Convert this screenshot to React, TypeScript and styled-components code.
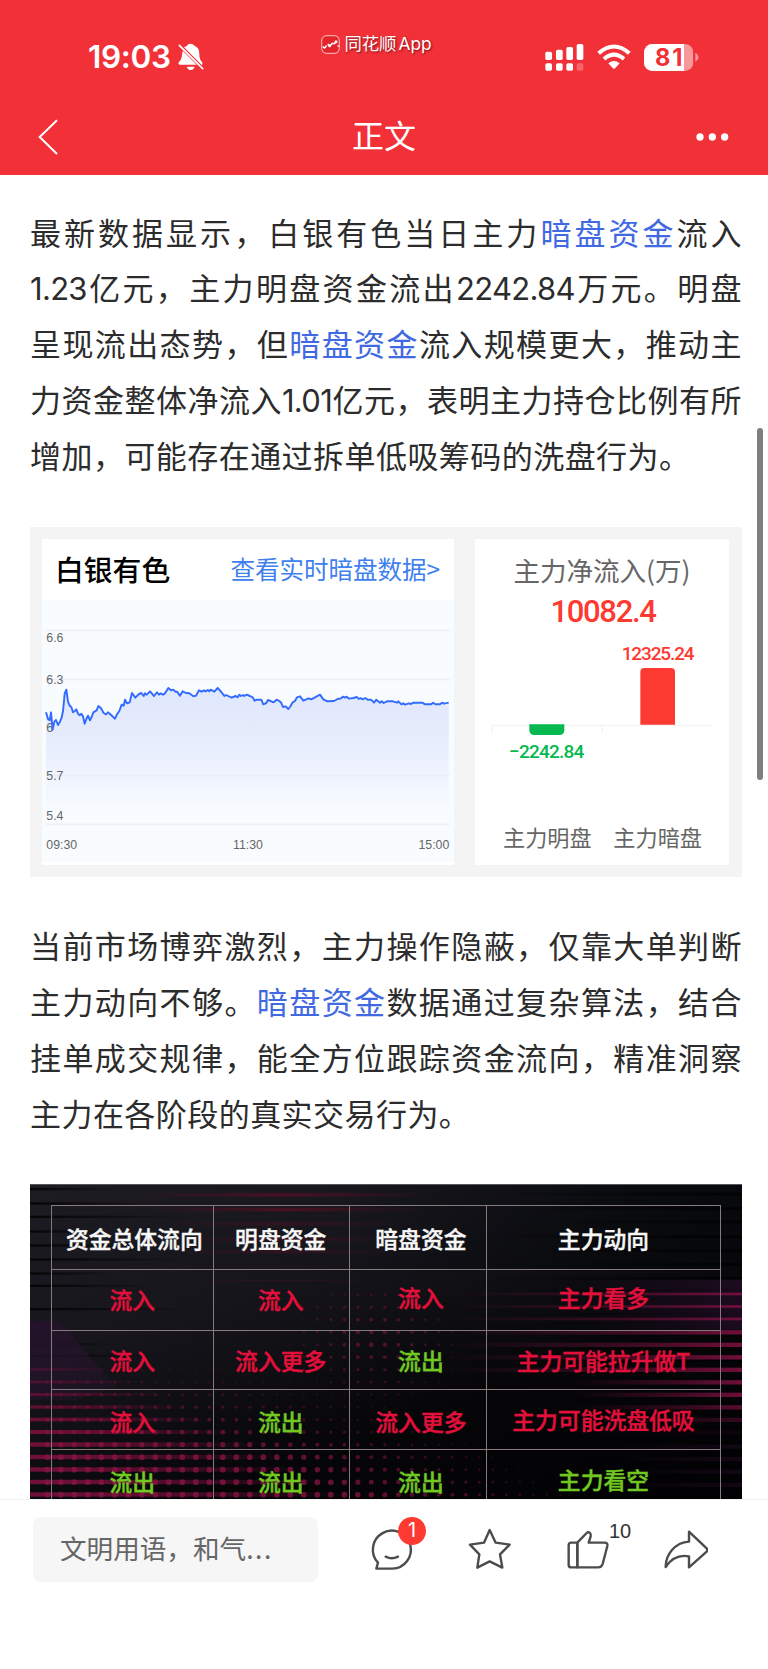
import React from "react";
import styled, { createGlobalStyle } from "styled-components";

const cjk = '"Noto Sans CJK SC", sans-serif';

const GlobalStyle = createGlobalStyle`
  * { box-sizing: border-box; }
  body {
    margin: 0;
    background: #fff;
    font-family: Inter, ${cjk};
    text-spacing-trim: space-all;
    text-autospace: no-autospace;
  }
  svg { display: block; flex: none; }
`;

const Page = styled.div`
  position: relative;
  display: flex;
  flex-direction: column;
  width: 768px;
  height: 1669px;
  overflow: hidden;
  background: #fff;
`;

/* ---------- header ---------- */

const Header = styled.header`
  flex: none;
  height: 175px;
  background: #f23038;
  color: #fff;
`;

const StatusBar = styled.div`
  display: grid;
  grid-template-columns: 1fr 120px 1fr;
  height: 100px;
`;

const StatusLeft = styled.div`
  display: flex;
  align-items: center;
  gap: 7px;
  padding: 14px 0 0 88px;
`;

const Clock = styled.span`
  font: 600 31.5px/36px Inter, sans-serif;
  width: 83px;
  letter-spacing: -0.3px;
  white-space: nowrap;
`;

const AppTag = styled.div`
  display: flex;
  align-items: center;
  justify-content: center;
  gap: 4px;
  height: 26px;
  margin-top: 31px;
  padding-right: 15px;
  font: 400 17.4px/26px Inter, ${cjk};
  letter-spacing: -0.1px;
  word-spacing: -2.5px;
  white-space: nowrap;
  text-shadow: 1px 1px 2px rgba(90, 0, 0, 0.75);
`;

const StatusRight = styled.div`
  display: flex;
  align-items: center;
  gap: 13px;
  padding: 14px 0 0 101px;
`;

const NavBar = styled.nav`
  display: flex;
  align-items: center;
  justify-content: space-between;
  height: 75px;
  padding: 0 39px 2px 38px;
`;

const NavTitle = styled.h1`
  margin: 0;
  padding: 0 0 5px 13px;
  font: 400 32px/44px ${cjk};
`;

/* ---------- article ---------- */

const Article = styled.main`
  flex: 1;
  min-height: 0;
  overflow: hidden;
  padding: 28.5px 26.5px 0 30px;
`;

const Paragraph = styled.p<{ $gap: number }>`
  margin: 0 0 ${(p) => p.$gap}px;
  color: #2c2c2c;
  font: 400 31px/55.9px ${cjk};
`;

const Line = styled.span<{ $end?: boolean }>`
  display: block;
  height: 55.9px;
  white-space: nowrap;
  text-align: justify;
  text-align-last: ${(p) => (p.$end ? "left" : "justify")};
  letter-spacing: ${(p) => (p.$end ? "0.45px" : "0")};
`;

const Num = styled.span`
  font-family: Inter, sans-serif;
  line-height: 1;
  letter-spacing: -0.7px;
`;

const Link = styled.a`
  color: #4169e1;
`;

/* ---------- stock card ---------- */

const StockCard = styled.section`
  display: flex;
  gap: 21px;
  height: 350px;
  margin-bottom: 40.5px;
  padding: 12px 12.5px 12px 12px;
  background: #f4f4f4;
`;

const Panel = styled.div<{ $width: number }>`
  width: ${(p) => p.$width}px;
  background: #fff;
`;

const PanelHead = styled.div`
  display: flex;
  align-items: center;
  justify-content: space-between;
  height: 61px;
  padding: 0 14px 0 13px;
`;

const StockName = styled.strong`
  color: #000;
  font: 500 28.8px/40px ${cjk};
`;

const DetailLink = styled.a`
  color: #3e80ee;
  font: 400 24.5px/36px ${cjk};
`;

const FlowHead = styled.div`
  display: flex;
  flex-direction: column;
  align-items: center;
  height: 92px;
  padding-top: 12px;
`;

const FlowTitle = styled.span`
  color: #666;
  font: 400 26.5px/38px ${cjk};
`;

const FlowTotal = styled.strong`
  padding: 2px 0 0 2px;
  color: #fd3a31;
  font: 500 31px/42px Roboto, sans-serif;
  letter-spacing: -1.3px;
`;

/* ---------- table picture ---------- */

const Picture = styled.figure`
  position: relative;
  height: 330px;
  margin: 0;
  padding: 21.3px 21px 0 20.6px;
  overflow: hidden;
  background: #0c0c10;
`;

const Backdrop = styled.svg`
  position: absolute;
  inset: 0;
`;

const FlowTable = styled.div`
  position: relative;
  display: grid;
  grid-template-columns: 162.4px 136.4px 137px 1fr;
  grid-template-rows: 63.5px 60.7px 59.2px 60.7px 61px;
  border-left: 1.5px solid #877a7d;
  border-top: 1.5px solid #877a7d;
`;

const Cell = styled.div<{ $color: string; $x: number; $y: number }>`
  display: flex;
  align-items: center;
  justify-content: center;
  border-right: 1.5px solid #877a7d;
  border-bottom: 1.5px solid #877a7d;
  color: ${(p) => p.$color};
  font: 500 22.8px/26px ${cjk};
  -webkit-text-stroke: 0.4px currentColor;
  white-space: nowrap;

  > span {
    transform: translate(${(p) => p.$x}px, ${(p) => p.$y - 1.5}px);
  }
`;

/* ---------- bottom bar ---------- */

const BottomBar = styled.footer`
  flex: none;
  display: flex;
  align-items: flex-start;
  height: 170.5px;
  padding: 17px 0 0 33px;
  border-top: 1px solid #f3f3f3;
  background: #fff;
`;

const CommentInput = styled.div`
  width: 285px;
  height: 65px;
  padding: 0 27px;
  border-radius: 8px;
  background: #f6f6f6;
  color: #666;
  font: 400 26.6px/62px ${cjk};
  white-space: nowrap;
`;

const Ellipsis = styled.span`
  letter-spacing: 1.5px;
`;

const Actions = styled.div`
  display: flex;
  padding: 10px 0 0 52px;
  gap: 54px;
`;

const Action = styled.div`
  position: relative;
  width: 44px;
  height: 44px;
`;

const Badge = styled.span`
  position: absolute;
  left: 28px;
  top: -10px;
  width: 28px;
  height: 28px;
  border-radius: 50%;
  background: #fd3a31;
  color: #fff;
  font: 400 20px/27px Inter, sans-serif;
  text-align: center;
`;

const Count = styled.span`
  position: absolute;
  left: 43px;
  top: -8px;
  color: #333;
  font: 400 20px/24px "Liberation Sans", sans-serif;
`;

const ScrollThumb = styled.div`
  position: absolute;
  left: 757px;
  top: 428px;
  width: 6px;
  height: 352px;
  border-radius: 3px;
  background: #7f7f7f;
`;

/* ---------- price chart ---------- */

const pricePoints =
  "78,594 84,614 89,618 93,594 98,646 103,622 108,617 114,632 120,622 125,610 129,590 132,560 134,538 139,526 144,562 149,574 154,578 159,594 164,590 169,585 174,598 179,603 184,598 189,606 194,628 199,614 204,604 210,618 215,608 220,594 230,588 235,575 243,582 251,596 258,600 264,594 274,603 285,613 291,600 298,590 305,571 311,574 315,556 321,567 329,564 336,536 346,550 357,539 364,536 371,545 375,537 380,541 390,531 402,545 411,534 417,541 421,537 429,541 435,537 445,521 453,528 460,526 466,532 471,532 480,544 488,531 498,536 508,537 520,546 528,544 537,528 545,532 552,528 557,531 563,527 568,531 572,526 583,532 593,521 603,532 613,545 618,542 635,550 647,545 653,549 658,541 663,545 669,542 673,545 680,541 690,545 698,549 704,559 710,556 724,556 730,570 739,566 744,557 761,564 770,556 778,560 784,566 789,578 797,576 805,584 810,578 818,564 825,560 831,549 840,546 850,559 866,552 874,555 885,549 900,541 910,555 922,561 942,560 953,554 963,552 969,547 975,550 980,547 987,553 1000,551 1011,548 1016,554 1021,551 1028,555 1036,551 1043,556 1053,556 1062,565 1069,556 1080,565 1085,561 1091,566 1101,561 1119,561 1131,565 1135,561 1144,570 1150,567 1155,571 1167,567 1173,569 1180,565 1207,565 1215,570 1233,570 1239,565 1246,570 1260,570 1266,565 1272,568 1286,565";

const gridLines = [348, 495, 640, 783, 930];
const priceLabels: [string, number][] = [
  ["6.6", 384],
  ["6.3", 509],
  ["6", 653],
  ["5.7", 798],
  ["5.4", 918],
];

const PriceChart = () => (
  <svg width="412" height="262" viewBox="66 257 1236 786">
    <defs>
      <linearGradient id="area" gradientUnits="userSpaceOnUse" x1="0" y1="520" x2="0" y2="915">
        <stop offset="0" stopColor="#dfe7fc" />
        <stop offset="0.35" stopColor="#e6ecfd" />
        <stop offset="1" stopColor="#f9fcff" />
      </linearGradient>
    </defs>
    <rect x="66" y="257" width="1236" height="786" fill="#f9fcff" />
    <polygon points={`${pricePoints} 1286,928 78,928`} fill="url(#area)" />
    {gridLines.map((y) => (
      <path key={y} d={`M78 ${y}H1289`} stroke="#e6eaf3" strokeOpacity="0.65" strokeWidth="5" />
    ))}
    <g fill="#666" fontFamily="Liberation Sans, sans-serif" fontSize="37">
      {priceLabels.map(([label, y]) => (
        <text key={label} x="79" y={y}>{label}</text>
      ))}
      <text x="79" y="1004">09:30</text>
      <text x="639" y="1004">11:30</text>
      <text x="1288" y="1004" textAnchor="end">15:00</text>
    </g>
    <polyline points={pricePoints} fill="none" stroke="#336bff" strokeWidth="5.8" strokeLinejoin="round" />
  </svg>
);

const FlowChart = () => (
  <svg width="254" height="233" viewBox="45 349 762 699">
    <path d="M97 656V632H759M427 632V656" fill="none" stroke="#f3f3f3" strokeWidth="4" />
    <path d="M541 630V472Q541 460 553 460H633Q645 460 645 472V630Z" fill="#fd3a31" />
    <path d="M208 629V645Q208 661 224 661H297Q313 661 313 645V629Z" fill="#05b850" />
    <g fontFamily="Roboto, sans-serif" fontSize="57" fontWeight="500">
      <text x="485" y="436" textLength="219" fill="#fd3a31">12325.24</text>
      <text x="147" y="731" textLength="226" fill="#05b850">−2242.84</text>
    </g>
    <g fontFamily="Noto Sans CJK SC, sans-serif" fontSize="66.5" fill="#666">
      <text x="129" y="995">主力明盘</text>
      <text x="460" y="995">主力暗盘</text>
    </g>
  </svg>
);

/* ---------- table backdrop ---------- */

const rowY = (i: number) => 375 + i * 37.5;

const dots: { x: number; y: number; r: number; o: number }[] = [];
for (let i = 0; i < 17; i++) {
  for (let k = 0; k < 45; k++) {
    const x = 142 + k * 40.5;
    const y = rowY(i);
    const low = i < 6 ? 0 : Math.min(1, (i - 5) / 8) * Math.max(0, 1 - Math.max(0, x - 300 - (i - 6) * 75) / 700);
    const mid = Math.max(0, 1 - Math.hypot((x - 1120) / 290, (y - 510) / 210)) * 0.75;
    const v = Math.max(low, mid);
    if (v > 0.05) dots.push({ x, y, r: 2.5 + v * 6, o: 0.2 + v * 0.55 });
  }
}

const darkStreaks = [55, 98, 138, 182, 224, 266, 308, 345, 415, 520, 555];
const leftStripes = Array.from({ length: 11 }, (_, i) => i);
const rightStripes = Array.from({ length: 12 }, (_, i) => i);

const TableBackdrop = () => (
  <Backdrop width="712" height="330" viewBox="90 43 2136 990" preserveAspectRatio="none">
    <defs>
      <linearGradient id="base" x1="0" y1="0" x2="0.8" y2="1">
        <stop offset="0" stopColor="#1c1c22" />
        <stop offset="0.35" stopColor="#15151b" />
        <stop offset="0.7" stopColor="#060609" />
        <stop offset="1" stopColor="#020204" />
      </linearGradient>
      <linearGradient id="fadeRight">
        <stop offset="0" stopColor="#711039" />
        <stop offset="0.35" stopColor="#5c0d2e" />
        <stop offset="1" stopColor="#5c0d2e" stopOpacity="0" />
      </linearGradient>
      <linearGradient id="fadeLeft">
        <stop offset="0" stopColor="#680f36" stopOpacity="0" />
        <stop offset="0.6" stopColor="#680f36" stopOpacity="0.6" />
        <stop offset="1" stopColor="#7b1040" />
      </linearGradient>
      <linearGradient id="streak">
        <stop offset="0" stopColor="#000" stopOpacity="0.8" />
        <stop offset="1" stopColor="#000" stopOpacity="0" />
      </linearGradient>
      <linearGradient id="streakRight">
        <stop offset="0" stopColor="#000" stopOpacity="0" />
        <stop offset="1" stopColor="#000" stopOpacity="0.7" />
      </linearGradient>
      <linearGradient id="glow">
        <stop offset="0" stopColor="#5a0d25" stopOpacity="0" />
        <stop offset="0.5" stopColor="#5a0d25" stopOpacity="0.7" />
        <stop offset="1" stopColor="#5a0d25" stopOpacity="0" />
      </linearGradient>
      <linearGradient id="violet" x1="0" y1="0" x2="0.8" y2="1">
        <stop offset="0" stopColor="#24122a" />
        <stop offset="1" stopColor="#27152f" stopOpacity="0.35" />
      </linearGradient>
      <linearGradient id="haze">
        <stop offset="0" stopColor="#2a0f2c" stopOpacity="0" />
        <stop offset="1" stopColor="#2a0f2c" stopOpacity="0.6" />
      </linearGradient>
      <linearGradient id="shadeRight">
        <stop offset="0" stopColor="#05070a" stopOpacity="0" />
        <stop offset="1" stopColor="#05070a" stopOpacity="0.75" />
      </linearGradient>
    </defs>
    <rect x="90" y="43" width="2136" height="990" fill="url(#base)" />
    <rect x="1000" y="43" width="1226" height="260" fill="url(#shadeRight)" />
    <rect x="90" y="43" width="2136" height="3" fill="#55565a" />
    {darkStreaks.map((y, i) => (
      <g key={y}>
        <rect x="90" y={y} width={260 + (i % 3) * 120} height="7" fill="url(#streak)" />
        <rect x={1450 + (i % 3) * 90} y={y + 14} width={776 - (i % 3) * 90} height="9" fill="url(#streakRight)" />
      </g>
    ))}
    {[70, 114, 157, 203, 240, 330].map((y, i) => (
      <rect key={y} x={400 + i * 25} y={y} width={900 - i * 50} height={i === 5 ? 4 : 11} fill="url(#glow)" opacity={i < 2 ? 1 : 0.55} />
    ))}
    <path d="M90 453H170Q210 480 235 520L350 655L230 690H90Z" fill="url(#violet)" />
    <rect x="1750" y="330" width="476" height="150" fill="url(#haze)" />
    {leftStripes.map((i) => (
      <rect
        key={i}
        x="90"
        y={rowY(i + 6) - 4 - Math.min(i, 6) / 2}
        width={260 + i * 70}
        height={7 + Math.min(i, 6)}
        fill="url(#fadeRight)"
        opacity={Math.min(1, 0.5 + i * 0.1)}
      />
    ))}
    {rightStripes.map((i) => (
      <rect
        key={i}
        x={i < 7 ? 1350 : 1720}
        y={rowY(i) - 6}
        width={i < 7 ? 876 : 506}
        height={i > 2 ? 13 : 8}
        fill="url(#fadeLeft)"
        opacity={i > 8 ? Math.max(0.1, 1 - (i - 8) * 0.3) : 0.9}
      />
    ))}
    {dots.map((d, i) => (
      <circle key={i} cx={d.x} cy={d.y} r={d.r} fill="#8a1445" opacity={d.o} />
    ))}
    {[825, 862, 900, 940].map((y) => (
      <rect key={y} x="1850" y={y} width="376" height="12" fill="url(#haze)" opacity="0.7" />
    ))}
  </Backdrop>
);

type CellData = { text: string; tone: "head" | "in" | "out"; x?: number; y?: number };
const tones = { head: "#f7f7f7", in: "#e3103c", out: "#71c821" };

const cells: CellData[] = [
  { text: "资金总体流向", tone: "head", x: 2, y: 2 },
  { text: "明盘资金", tone: "head", x: -1, y: 2 },
  { text: "暗盘资金", tone: "head", x: 2.5, y: 2 },
  { text: "主力动向", tone: "head", y: 2 },
  { text: "流入", tone: "in", y: 1 },
  { text: "流入", tone: "in", x: -1, y: 1 },
  { text: "流入", tone: "in", x: 2.5, y: -1 },
  { text: "主力看多", tone: "in", y: -1 },
  { text: "流入", tone: "in", y: 2 },
  { text: "流入更多", tone: "in", x: -1, y: 2 },
  { text: "流出", tone: "out", x: 2.5, y: 2 },
  { text: "主力可能拉升做T", tone: "in", y: 2 },
  { text: "流入", tone: "in", y: 3 },
  { text: "流出", tone: "out", x: -1, y: 3 },
  { text: "流入更多", tone: "in", x: 2.5, y: 3 },
  { text: "主力可能洗盘低吸", tone: "in", y: 1 },
  { text: "流出", tone: "out", y: 3 },
  { text: "流出", tone: "out", x: -1, y: 3 },
  { text: "流出", tone: "out", x: 2.5, y: 3 },
  { text: "主力看空", tone: "out", y: 1 },
];

/* ---------- icons ---------- */

const BellOff = () => (
  <svg width="26" height="28" viewBox="532 130 78 84">
    <path d="M569 132C576 132 580 136 582 139C593 143 596 152 596 163C596 174 598 181 604 187C606 190 606 194 603 196L550 143C554 141 557 139 559 138C561 134 564 132 569 132Z" fill="#fff" />
    <path d="M546 153L588 195H538C533 195 532 190 535 187C541 181 543 176 544 166Z" fill="#fff" />
    <path d="M558 201H582C580 208 575 211 570 211C565 211 560 208 558 201Z" fill="#fff" />
    <path d="M536 137L606 207" stroke="#fff" strokeWidth="5" strokeLinecap="round" />
  </svg>
);

const BrandMark = () => (
  <svg width="19" height="19" viewBox="0 0 57 57">
    <rect x="2" y="2" width="53" height="53" rx="15" fill="#e3242c" stroke="#f9a5a6" strokeWidth="3.5" />
    <path d="M5 35L11 39L17 31M20 27L27 33L34 25L40 26L46 20" fill="none" stroke="#fff" strokeWidth="4.5" />
    <circle cx="45" cy="20" r="4.5" fill="#fff" />
    <circle cx="26" cy="32" r="4.5" fill="#fff" />
    <path d="M50 31L53 35" stroke="#fff" strokeWidth="4" />
  </svg>
);

const signalBars = [
  [483, 152, 25],
  [515, 146, 31],
  [546, 138, 39],
  [577, 129, 48],
];

const Signal = () => (
  <svg width="38.7" height="27" viewBox="482 129 116 81" fill="#fff">
    {signalBars.map(([x, y, h], i) => (
      <g key={x}>
        <rect x={x} y={y} width="20" height={h} rx="5" />
        <rect x={x} y="187" width="20" height="22" rx="5" opacity={i === 3 ? 0.25 : 1} />
      </g>
    ))}
  </svg>
);

const Wifi = () => (
  <svg width="34" height="26" viewBox="636 130 102 78">
    <g fill="none" stroke="#fff" strokeWidth="12">
      <path d="M641 158Q687 117 733 158" />
      <path d="M657 175Q687 149 717 175" />
    </g>
    <path d="M670 188Q687 174 704 188L690 203Q687 206 684 203Z" fill="#fff" />
  </svg>
);

const Battery = () => (
  <svg width="55" height="27" viewBox="776 129 165 81">
    <defs>
      <clipPath id="cell">
        <rect x="776" y="129" width="148" height="81" rx="25" />
      </clipPath>
    </defs>
    <g clipPath="url(#cell)">
      <rect x="776" y="129" width="148" height="81" fill="#f9989b" />
      <rect x="776" y="129" width="120" height="81" fill="#fff" />
    </g>
    <path d="M930 156Q939 160 939 169Q939 178 930 182Z" fill="#f9989b" />
    <text x="809" y="195" textLength="82" fontFamily="Inter, sans-serif" fontWeight="700" fontSize="71" fill="#f23038">81</text>
  </svg>
);

const BackArrow = () => (
  <svg width="21" height="36" viewBox="115 355 63 108">
    <path d="M172 359L120 409L172 460" fill="none" stroke="#fff" strokeWidth="6" />
  </svg>
);

const MoreDots = () => (
  <svg width="33" height="8" viewBox="0 0 99 24" fill="#fff">
    <circle cx="12" cy="12" r="11" />
    <circle cx="49" cy="12" r="11" />
    <circle cx="86" cy="12" r="11" />
  </svg>
);

const ActionIcon = ({ children, x }: { children: React.ReactNode; x: number }) => (
  <svg width="44" height="44" viewBox={`${x} 110 132 132`} fill="none" stroke="#4c4c4c" strokeWidth="7.2" strokeLinejoin="round" strokeLinecap="round">
    {children}
  </svg>
);

export default function App() {
  return (
    <Page>
      <GlobalStyle />
      <Header>
        <StatusBar>
          <StatusLeft>
            <Clock>19:03</Clock>
            <BellOff />
          </StatusLeft>
          <AppTag>
            <BrandMark />
            <span>同花顺 App</span>
          </AppTag>
          <StatusRight>
            <Signal />
            <Wifi />
            <Battery />
          </StatusRight>
        </StatusBar>
        <NavBar>
          <BackArrow />
          <NavTitle>正文</NavTitle>
          <MoreDots />
        </NavBar>
      </Header>

      <Article>
        <Paragraph $gap={44}>
          <Line>最新数据显示，白银有色当日主力<Link>暗盘资金</Link>流入</Line>
          <Line><Num>1.23</Num>亿元，主力明盘资金流出<Num>2242.84</Num>万元。明盘</Line>
          <Line>呈现流出态势，但<Link>暗盘资金</Link>流入规模更大，推动主</Line>
          <Line>力资金整体净流入<Num>1.01</Num>亿元，表明主力持仓比例有所</Line>
          <Line $end>增加，可能存在通过拆单低吸筹码的洗盘行为。</Line>
        </Paragraph>

        <StockCard>
          <Panel $width={412}>
            <PanelHead>
              <StockName>白银有色</StockName>
              <DetailLink>查看实时暗盘数据&gt;</DetailLink>
            </PanelHead>
            <PriceChart />
          </Panel>
          <Panel $width={254}>
            <FlowHead>
              <FlowTitle>主力净流入(万)</FlowTitle>
              <FlowTotal>10082.4</FlowTotal>
            </FlowHead>
            <FlowChart />
          </Panel>
        </StockCard>

        <Paragraph $gap={43}>
          <Line>当前市场博弈激烈，主力操作隐蔽，仅靠大单判断</Line>
          <Line>主力动向不够。<Link>暗盘资金</Link>数据通过复杂算法，结合</Line>
          <Line>挂单成交规律，能全方位跟踪资金流向，精准洞察</Line>
          <Line $end>主力在各阶段的真实交易行为。</Line>
        </Paragraph>

        <Picture>
          <TableBackdrop />
          <FlowTable>
            {cells.map((c, i) => (
              <Cell key={i} $color={tones[c.tone]} $x={c.x ?? 0} $y={c.y ?? 0}>
                <span>{c.text}</span>
              </Cell>
            ))}
          </FlowTable>
        </Picture>
      </Article>

      <BottomBar>
        <CommentInput>文明用语，和气<Ellipsis>...</Ellipsis></CommentInput>
        <Actions>
          <Action>
            <ActionIcon x={59}>
              <path d="M78 235H126A57 57 0 1 0 83 217Z" />
              <path d="M106 199Q124 209 143 199" />
            </ActionIcon>
            <Badge>1</Badge>
          </Action>
          <Action>
            <ActionIcon x={353}>
              <path d="M418 119L436 157L478 163L449 192L456 232L418 213L381 232L387 192L359 163L401 157Z" />
            </ActionIcon>
          </Action>
          <Action>
            <ActionIcon x={647}>
              <path d="M681 157H663Q655 157 655 165V223Q655 231 663 231H681Z" />
              <path d="M681 157L709 128Q714 123 719 128Q723 132 721 138L715 157H763Q773 157 771 167L757 221Q754 231 744 231H681Z" />
            </ActionIcon>
            <Count>10</Count>
          </Action>
          <Action>
            <ActionIcon x={941}>
              <path d="M1016 124L1069 174Q1073 179 1069 184L1016 231V198Q972 190 946 230C946 193 973 157 1016 154Z" />
            </ActionIcon>
          </Action>
        </Actions>
      </BottomBar>

      <ScrollThumb />
    </Page>
  );
}
